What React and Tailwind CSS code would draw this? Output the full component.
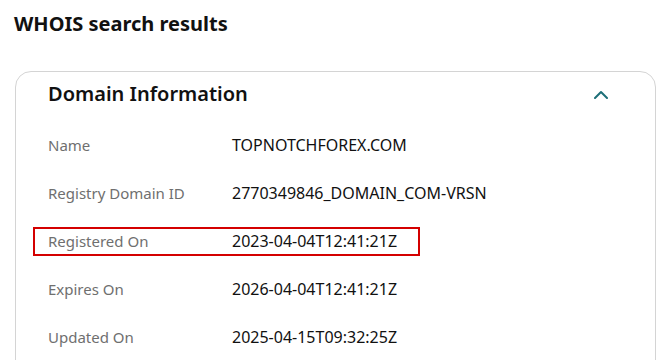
import React from 'react'

const rows = [
  { label: 'Name', value: 'TOPNOTCHFOREX.COM' },
  { label: 'Registry Domain ID', value: '2770349846_DOMAIN_COM-VRSN' },
  { label: 'Registered On', value: '2023-04-04T12:41:21Z', marked: true },
  { label: 'Expires On', value: '2026-04-04T12:41:21Z' },
  { label: 'Updated On', value: '2025-04-15T09:32:25Z' },
]

function App() {
  return (
    <div className="w-[671px] h-[360px] overflow-hidden bg-white px-[14px] font-['Noto_Sans',sans-serif] text-[#111]">
      <h1 className="mt-[10px] text-[20px] leading-[28px] font-bold">WHOIS search results</h1>

      <div className="mt-[33px] ml-[1px] w-[641px] h-[400px] border border-[#d4d4d4] rounded-[16px]">
        <div className="h-[49px] flex items-start justify-between pt-[8px] pl-[32px] pr-[47px]">
          <h2 className="text-[20px] font-semibold leading-[28px]">Domain Information</h2>
          <svg width="14" height="9" viewBox="0 0 14 9" fill="none" className="mt-[10px]">
            <path d="M1 8 L7 2 L13 8" stroke="#1d6f78" strokeWidth="2" strokeLinecap="round" strokeLinejoin="round" />
          </svg>
        </div>

        {rows.map((r) => (
          <div key={r.label} className="h-[48px] flex items-center pl-[32px]">
            <div className="relative flex items-center w-full h-[29px]">
              {r.marked && (
                <div className="absolute left-[-15px] top-0 w-[387px] h-[29px] border-2 border-[#d40000]" />
              )}
              <span className="w-[184px] text-[15px] text-[#6f6f6f]">{r.label}</span>
              <span className="text-[16px] text-[#111]">{r.value}</span>
            </div>
          </div>
        ))}
      </div>
    </div>
  )
}

export default App
